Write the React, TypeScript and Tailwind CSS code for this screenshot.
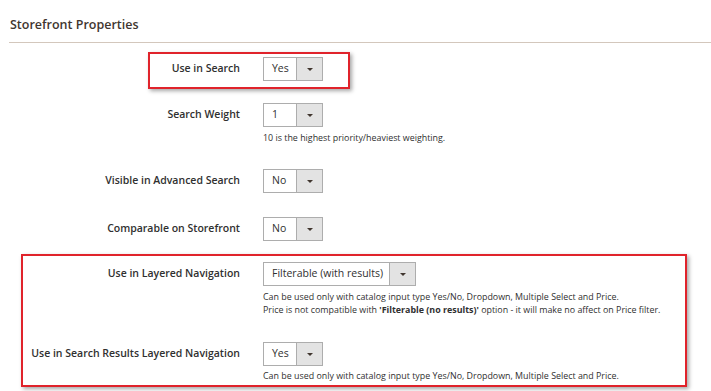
import React from "react";

const FONT = { fontFamily: '"Open Sans", "Noto Sans", sans-serif' };

function Select({ value, wide = false }: { value: string; wide?: boolean }) {
  return (
    <div
      className={`flex h-[24px] border border-[#adadad] bg-white ${wide ? "w-[153px]" : "w-[60px]"}`}
    >
      <div className="flex flex-1 items-center pl-[8px] text-[10.5px] text-[#303030]">{value}</div>
      <div className="flex w-[26px] items-center justify-center border-l border-[#adadad] bg-[#e3e3e3]">
        <svg width="6" height="3" viewBox="0 0 6 3">
          <path d="M0 0h6L3 3z" fill="#41362f" />
        </svg>
      </div>
    </div>
  );
}

function Row({
  label,
  children,
  className = "",
}: {
  label: string;
  children: React.ReactNode;
  className?: string;
}) {
  return (
    <div className={`grid grid-cols-[240px_1fr] gap-x-[23px] ${className}`}>
      <div className="flex h-[24px] items-center justify-end text-[10.5px] font-semibold text-[#303030]">
        {label}
      </div>
      <div>{children}</div>
    </div>
  );
}

function Note({ children, className = "" }: { children: React.ReactNode; className?: string }) {
  return <div className={`text-[8.9px] leading-[13px] text-[#303030] ${className}`}>{children}</div>;
}

export default function App() {
  return (
    <div className="relative h-[391px] w-[711px] overflow-hidden bg-white" style={FONT}>
      <div className="pl-[10px] pt-[16px] text-[12.5px] font-semibold leading-[18px] text-[#41362f]">
        Storefront Properties
      </div>
      <div className="ml-[9px] mt-[8px] h-px bg-[#d3c7bc]" />

      <Row label="Use in Search" className="mt-[14px]">
        <Select value="Yes" />
      </Row>

      <Row label="Search Weight" className="mt-[22px]">
        <Select value="1" />
        <Note className="mt-[4px]">10 is the highest priority/heaviest weighting.</Note>
      </Row>

      <Row label="Visible in Advanced Search" className="mt-[25px]">
        <Select value="No" />
      </Row>

      <Row label="Comparable on Storefront" className="mt-[24px]">
        <Select value="No" />
      </Row>

      <Row label="Use in Layered Navigation" className="mt-[21px]">
        <Select value="Filterable (with results)" wide />
        <Note className="mt-[4px]">
          Can be used only with catalog input type Yes/No, Dropdown, Multiple Select and Price.
          <br />
          Price is not compatible with <b>'Filterable (no results)'</b> option - it will make no affect on
          Price filter.
        </Note>
      </Row>

      <Row label="Use in Search Results Layered Navigation" className="mt-[26px]">
        <Select value="Yes" />
        <Note className="mt-[3px]">
          Can be used only with catalog input type Yes/No, Dropdown, Multiple Select and Price.
        </Note>
      </Row>

      {/* annotation boxes */}
      <div className="absolute left-[148px] top-[52px] h-[37px] w-[202px] border-2 border-[#e0232b] shadow-[2px_2px_4px_rgba(0,0,0,0.35)]" />
      <div className="absolute left-[21px] top-[254px] h-[133px] w-[666px] border-2 border-[#e0232b] shadow-[2px_2px_4px_rgba(0,0,0,0.35)]" />
    </div>
  );
}
